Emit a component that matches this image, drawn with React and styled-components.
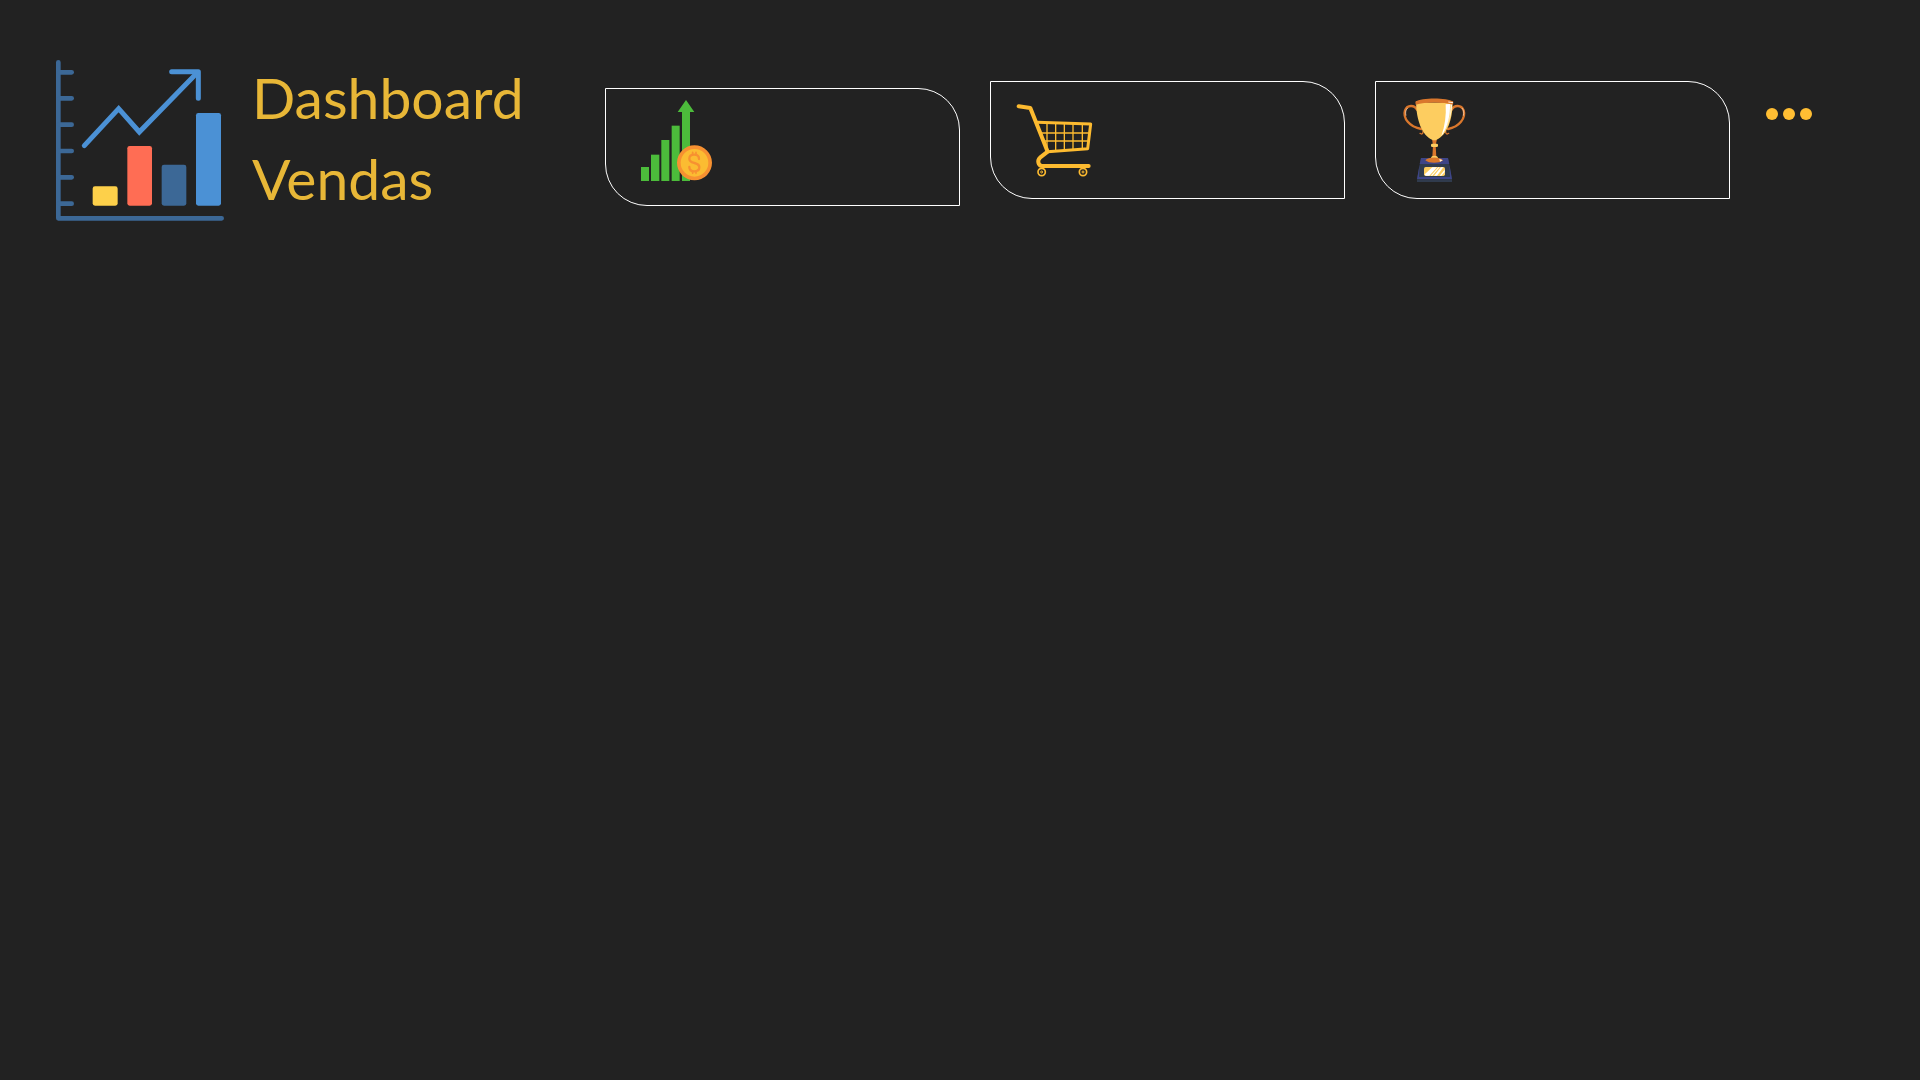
import React from "react";
import styled, { createGlobalStyle } from "styled-components";

const GlobalStyle = createGlobalStyle`
  *, *::before, *::after { box-sizing: border-box; }
  body {
    margin: 0;
    background: #222222;
    font-family: Lato, "Liberation Sans", sans-serif;
  }
`;

const Page = styled.div`
  min-height: 100vh;
  background: #222222;
`;

const Header = styled.header`
  display: flex;
  align-items: flex-start;
  padding: 57px 97px 0 56px;
`;

const Brand = styled.div`
  display: flex;
  align-items: flex-start;
  gap: 28px;
  flex: 0 0 549px;
`;

const Logo = styled.svg`
  width: 168px;
  height: 161px;
  flex: none;
  margin-top: 3px;
`;

const Title = styled.h1`
  margin: 0;
  color: #e8b737;
  font-size: 57px;
  font-weight: 400;
  line-height: 81px;
`;

const TitleLine = styled.span`
  display: block;
`;

const Cards = styled.main`
  display: grid;
  grid-template-columns: repeat(3, 1fr);
  align-items: start;
  gap: 30px;
  flex: 1;
  padding-top: 24px;
`;

const Card = styled.section`
  display: flex;
  margin-top: ${({ $lowered }) => ($lowered ? "7px" : "0")};
  padding: 11px 19px 15px;
  border: 1px solid #ffffff;
  border-radius: 0 42px 0 42px;
`;

const CardIcon = styled.svg`
  width: 90px;
  height: 90px;
`;

const MenuButton = styled.button`
  display: flex;
  gap: 5px;
  margin: 40px 0 0 25px;
  padding: 11px;
  border: 0;
  background: none;
  cursor: pointer;
`;

const Dot = styled.span`
  width: 12px;
  height: 12px;
  border-radius: 50%;
  background: #ffbe33;
`;

const ticks = [97, 175, 254, 333, 412, 491];

function ChartLogo() {
  return (
    <Logo viewBox="48 60 504 483" role="img" aria-label="Dashboard" fill="none" strokeLinecap="round">
      <g stroke="#3c6896" strokeWidth="14">
        <path d="M55 67V535H545" strokeLinejoin="round" />
        {ticks.map((y) => (
          <path key={y} d={`M57 ${y}H95`} />
        ))}
      </g>
      <g stroke="#4b91d5" strokeWidth="15">
        <path d="M133 317L236 206L298 276L470 100" strokeLinejoin="miter" />
        <path d="M395 95H475V175" strokeLinejoin="round" />
      </g>
      <rect x="158" y="439" width="75" height="58" rx="7" fill="#fdd04a" />
      <rect x="262" y="318" width="74" height="179" rx="7" fill="#ff6d54" />
      <rect x="365" y="374" width="74" height="123" rx="7" fill="#3c6896" />
      <rect x="468" y="219" width="75" height="278" rx="7" fill="#4b91d5" />
    </Logo>
  );
}

function GrowthIcon() {
  return (
    <CardIcon viewBox="105 90 270 270" aria-hidden="true">
      <g fill="#4cbc3b">
        <rect x="153" y="291" width="24" height="42" />
        <rect x="183" y="254" width="25" height="79" />
        <rect x="214" y="210" width="24" height="123" />
        <rect x="245" y="167" width="24" height="166" />
        <path d="M276 333V126H263L288 90L313 126H300V333Z" />
      </g>
      <circle cx="313.500" cy="278.500" r="47" fill="#fbbc32" stroke="#f79131" strokeWidth="11" />
      <g fill="none" stroke="#f79131" strokeWidth="7" strokeLinecap="round">
        <path d="M327 267C327 258 321 254 313 254C304 254 298 259 298 266C298 275 306 277 313 279C321 281 328 284 328 292C328 300 321 304 313 304C304 304 298 299 298 291" />
        <path d="M308 247V253M318 247V253M308 305V310M318 305V310" strokeWidth="5" />
      </g>
    </CardIcon>
  );
}

function CartIcon() {
  return (
    <CardIcon viewBox="90 69 270 270" aria-hidden="true" fill="none" stroke="#fdbb30">
      <path d="M184 189H326M194 213H324" strokeWidth="4" />
      <path d="M201 160V240M227 160V240M253 160V240M279 160V239M307 160V238" strokeWidth="4" />
      <path d="M171 157L332 162L323 236L203 245" strokeWidth="9" strokeLinejoin="round" />
      <path
        d="M116 109L151 114L203 245L180 263C171 271 174 288 187 288H326"
        strokeWidth="12"
        strokeLinecap="round"
        strokeLinejoin="round"
      />
      <circle cx="185" cy="306" r="11" strokeWidth="5" />
      <circle cx="309" cy="306" r="11" strokeWidth="5" />
      <circle cx="185" cy="306" r="3" strokeWidth="3" />
      <circle cx="309" cy="306" r="3" strokeWidth="3" />
    </CardIcon>
  );
}

function TrophyIcon() {
  return (
    <CardIcon viewBox="105 69 270 270" aria-hidden="true" fill="none">
      <g stroke="#da772c" strokeWidth="7" strokeLinecap="round">
        <path d="M171 119C163 104 142 104 135 121C128 144 148 171 184 177" />
        <path d="M275 119C283 104 304 104 311 121C318 144 298 171 264 177" />
        <path d="M189 183C190 192 185 194 180 190M257 183C256 192 261 194 266 190" strokeWidth="4" />
      </g>
      <path d="M138 137C135 126 138 118 143 114M310 137C313 127 310 118 306 114" stroke="#fbe0c5" strokeWidth="2" />
      <path d="M216 208H231L227 225L229 262H217L219 225Z" fill="#da772c" />
      <path d="M168 94C192 99 254 99 278 94C278 151 261 196 230 209Q223 212 216 209C186 196 169 151 168 94Z" fill="#fdcd60" />
      <path d="M257 103L276 101C275 137 263 176 244 198C255 168 259 136 257 103Z" fill="#ffffff" />
      <path d="M272 102C271 140 264 169 250 191" stroke="#fdcd60" strokeWidth="2" />
      <path d="M166 95C185 82 261 82 280 95L279 104C250 95 196 95 167 104Z" fill="#da772c" />
      <path d="M265 96L279 98" stroke="#fff2df" strokeWidth="3" />
      <rect x="213" y="221" width="21" height="10" rx="4" fill="#fdcd60" />
      <path d="M183 264H264L276 328H171Z" fill="#303b4d" />
      <path d="M183 264H264L268 282H179Z" fill="#3e4587" />
      <path d="M179 282L171 328H276L268 282L270 321H177Z" fill="#3e4587" />
      <rect x="171" y="328" width="105" height="8" fill="#303b4d" />
      <path d="M213 264Q214 257 223 257Q233 257 234 264Z" fill="#fdcd60" />
      <path d="M196 271C205 260 240 260 249 271C239 281 206 281 196 271Z" fill="#da772c" />
      <path d="M238 267L248 271L240 275Z" fill="#fff2df" />
      <rect x="192" y="291" width="63" height="27" rx="5" fill="#fdcd60" />
      <path d="M194 313L217 292H231L208 317H197ZM212 317L235 292H239L217 317ZM222 317L243 292H250L231 317ZM239 317L254 299V306L244 317Z" fill="#ffffff" />
    </CardIcon>
  );
}

const cards = [
  { label: "Crescimento", Icon: GrowthIcon, lowered: true },
  { label: "Compras", Icon: CartIcon },
  { label: "Metas", Icon: TrophyIcon },
];

export default function App() {
  return (
    <Page>
      <GlobalStyle />
      <Header>
        <Brand>
          <ChartLogo />
          <Title>
            <TitleLine>Dashboard</TitleLine>
            <TitleLine>Vendas</TitleLine>
          </Title>
        </Brand>
        <Cards>
          {cards.map(({ label, Icon, lowered }) => (
            <Card key={label} aria-label={label} $lowered={lowered}>
              <Icon />
            </Card>
          ))}
        </Cards>
        <MenuButton type="button" aria-label="Menu">
          <Dot />
          <Dot />
          <Dot />
        </MenuButton>
      </Header>
    </Page>
  );
}
